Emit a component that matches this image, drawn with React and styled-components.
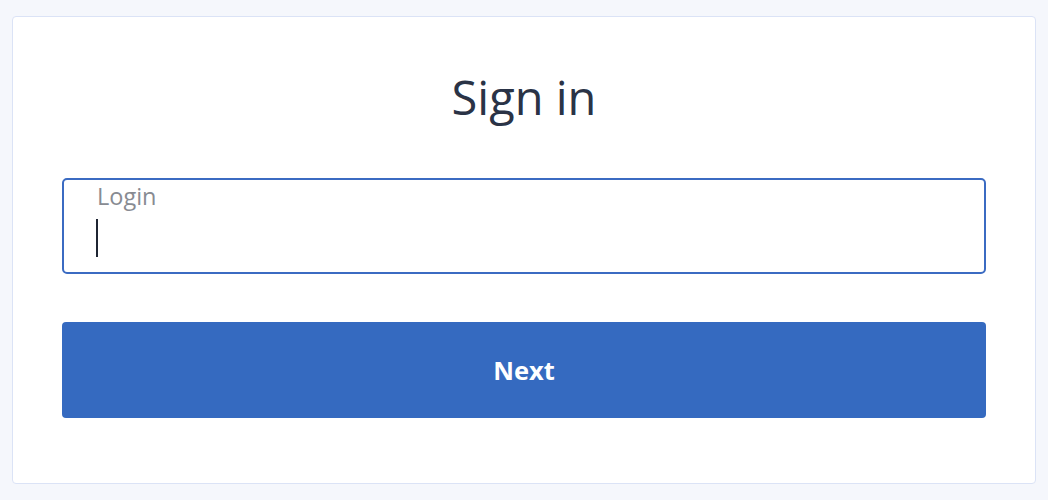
import React from 'react'
import styled, { createGlobalStyle } from 'styled-components'

const Global = createGlobalStyle`
  body {
    margin: 0;
    background: #f5f7fc;
    font-family: 'Open Sans', 'Noto Sans', sans-serif;
  }
`

const Page = styled.div`
  padding: 16px 12px;
`

const Card = styled.div`
  background: #fff;
  border: 1px solid #dbe3f6;
  border-radius: 4px;
  padding: 48px 49px 65px;
  display: flex;
  flex-direction: column;
`

const Title = styled.h1`
  margin: 0 0 49px;
  font-size: 47px;
  line-height: 64px;
  font-weight: 400;
  text-align: center;
  color: #2a3346;
`

const Field = styled.label`
  position: relative;
  display: block;
  height: 96px;
  box-sizing: border-box;
  border: 2px solid #3b6bc2;
  border-radius: 5px;
  padding: 2px 33px 0;
`

const Label = styled.span`
  display: block;
  font-size: 23.5px;
  line-height: 28px;
  color: #888b92;
`

const Input = styled.input`
  display: block;
  width: 100%;
  border: none;
  outline: none;
  padding: 0;
  margin-top: 6px;
  height: 40px;
  font: inherit;
  font-size: 24px;
  color: #2a3346;
  background: transparent;
  caret-color: transparent;
`

const Caret = styled.span`
  position: absolute;
  left: 32px;
  top: 39px;
  width: 2px;
  height: 38px;
  background: #1f2533;
`

const Button = styled.button`
  margin-top: 48px;
  height: 96px;
  border: none;
  border-radius: 4px;
  background: #356ac0;
  color: #fff;
  font-family: inherit;
  font-size: 25.5px;
  font-weight: 700;
  cursor: pointer;
`

export default function App() {
  return (
    <>
      <Global />
      <Page>
        <Card>
          <Title>Sign in</Title>
          <Field>
            <Label>Login</Label>
            <Input type='text' name='login' />
            <Caret />
          </Field>
          <Button type='submit'>Next</Button>
        </Card>
      </Page>
    </>
  )
}
